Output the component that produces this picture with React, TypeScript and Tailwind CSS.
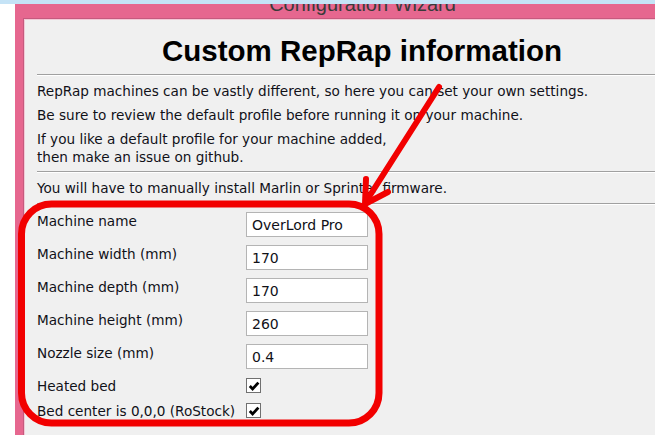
import React from "react";

type Field = { label: string; value: string };

const fields: Field[] = [
  { label: "Machine name", value: "OverLord Pro" },
  { label: "Machine width (mm)", value: "170" },
  { label: "Machine depth (mm)", value: "170" },
  { label: "Machine height (mm)", value: "260" },
  { label: "Nozzle size (mm)", value: "0.4" },
];

const checks = [
  { label: "Heated bed", checked: true },
  { label: "Bed center is 0,0,0 (RoStock)", checked: true },
];

function Separator() {
  return <div className="ml-[12px] h-[2px] border-t border-b border-t-[#a0a0a0] border-b-white" />;
}

function CheckBox({ checked }: { checked: boolean }) {
  return (
    <span className="flex h-[15px] w-[15px] items-center justify-center border border-[#707070] bg-white">
      {checked ? (
        <svg width="12" height="12" viewBox="0 0 12 12">
          <path d="M1.8 6 L4.6 8.9 L10.4 2.6" fill="none" stroke="#000" strokeWidth="2.8" />
        </svg>
      ) : null}
    </span>
  );
}

function Annotation() {
  return (
    <svg className="pointer-events-none absolute left-0 top-0" width="655" height="435" viewBox="0 0 655 435">
      <rect x="21.5" y="204" width="357.5" height="219" rx="30" fill="none" stroke="#f20000" strokeWidth="7" />
      <line x1="439" y1="87" x2="367" y2="200" stroke="#f20000" strokeWidth="6" strokeLinecap="round" />
      <polyline points="366,179 365,204 388,192" fill="none" stroke="#f20000" strokeWidth="6" strokeLinecap="round" strokeLinejoin="round" />
    </svg>
  );
}

export default function App() {
  return (
    <div className="relative h-[435px] w-[655px] overflow-hidden bg-white font-['DejaVu_Sans',Tahoma,sans-serif] text-[#111118]">
      <div className="h-[4px] bg-[#c5e3f6]" />
      <div className="flex h-[431px]">
        <div className="w-[15px] shrink-0 bg-white" />
        <div className="flex min-w-0 flex-1 flex-col bg-[#e6678f]">
          <div className="h-[14px] overflow-hidden">
            <div className="ml-[-15px] mt-[-11px] w-[725px] text-center font-['Liberation_Sans',Arial,sans-serif] text-[20px] leading-[22px] text-[#3a3a3a]">
              Configuration Wizard
            </div>
          </div>
          <div className="ml-[8px] w-[676px] flex-1 border-l border-t border-[#c65a7e]">
            <div className="h-full border-l border-t border-[#f3c9d6] bg-[#f0f0f0]">
              <div className="h-[54px] pt-[15px] text-center font-['Liberation_Sans',Arial,sans-serif] text-[29.5px] font-bold leading-[31px] text-black">
                Custom RepRap information
              </div>
              <Separator />
              <div className="pb-[5px] pl-[12px] pt-[6px] text-[13.6px] leading-[18px]">
                <p>RepRap machines can be vastly different, so here you can set your own settings.</p>
                <p className="mt-[6px]">Be sure to review the default profile before running it on your machine.</p>
                <p className="mt-[6px]">
                  If you like a default profile for your machine added,
                  <br />
                  then make an issue on github.
                </p>
              </div>
              <Separator />
              <div className="pb-[6px] pl-[12px] pt-[6px] text-[13.6px] leading-[18px]">
                You will have to manually install Marlin or Sprinter firmware.
              </div>
              <Separator />
              <div className="flex flex-col gap-[8px] pl-[12px] pt-[7px] text-[13.6px] leading-[18px]">
                {fields.map((f) => (
                  <div key={f.label} className="flex h-[25px]">
                    <span className="w-[209px] shrink-0">{f.label}</span>
                    <span className="flex h-[25px] w-[122px] items-center border border-[#b4b4b4] bg-white pl-[5px] text-[14px]">
                      {f.value}
                    </span>
                  </div>
                ))}
              </div>
              <div className="mt-[9px] flex flex-col gap-[10px] pl-[12px] text-[13.6px] leading-[18px]">
                {checks.map((c) => (
                  <div key={c.label} className="flex h-[15px] items-center">
                    <span className="w-[209px] shrink-0 whitespace-nowrap">{c.label}</span>
                    <CheckBox checked={c.checked} />
                  </div>
                ))}
              </div>
            </div>
          </div>
        </div>
      </div>
      <Annotation />
    </div>
  );
}
